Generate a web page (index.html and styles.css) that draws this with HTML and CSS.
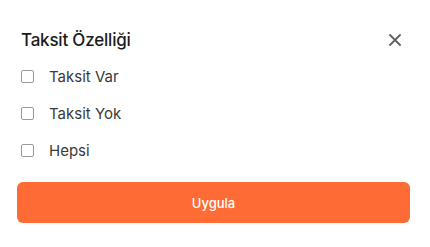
FILE: index.html
```html
<!DOCTYPE html>
<html lang="tr">

<head>
    <meta charset="UTF-8">
    <meta name="viewport" content="width=device-width, initial-scale=1.0">
    <title>Taksit Özelliği</title>
    <link rel="stylesheet" href="styles.css">
</head>

<body>
    <div class="filter_panel">
        <div class="filter_header">
            <h3 class="filter_title">Taksit Özelliği</h3>
            <a href="javascript:;" class="filter_close" aria-label="Kapat">
                <svg width="12" height="12" viewBox="0 0 12 12">
                    <path d="M1 1L11 11M11 1L1 11" stroke="#5f6166" stroke-width="1.8" stroke-linecap="round" />
                </svg>
            </a>
        </div>
        <ul class="filter_list">
            <li><label><input type="checkbox"><span>Taksit Var</span></label></li>
            <li><label><input type="checkbox"><span>Taksit Yok</span></label></li>
            <li><label><input type="checkbox"><span>Hepsi</span></label></li>
        </ul>
        <button class="filter_apply">Uygula</button>
    </div>
</body>

</html>
```

FILE: styles.css
```css
* {
    margin: 0;
    padding: 0;
    box-sizing: border-box;
}

body {
    background-color: #fff;
    font-family: "Inter", "Noto Sans", sans-serif;
}

.filter_panel {
    padding: 28px 20px 0 17px;
}

.filter_header {
    display: flex;
    align-items: center;
    justify-content: space-between;
    height: 24px;
    padding-left: 4px;
}

.filter_title {
    font-size: 17px;
    font-weight: 500;
    color: #1b1b1b;
    letter-spacing: -0.2px;
}

.filter_close {
    display: flex;
    margin-right: 9px;
}

.filter_list {
    list-style: none;
    margin-top: 6px;
    padding-left: 4px;
}

.filter_list li {
    height: 37px;
    display: flex;
    align-items: center;
}

.filter_list label {
    display: flex;
    align-items: center;
    cursor: pointer;
}

.filter_list input {
    appearance: none;
    width: 13px;
    height: 13px;
    border: 1px solid #9a9a9a;
    border-radius: 2px;
    background: #fff;
}

.filter_list span {
    margin-left: 15px;
    font-size: 15px;
    color: #3a3a3a;
}

.filter_apply {
    display: block;
    width: 393px;
    height: 41px;
    margin-top: 13px;
    border: none;
    border-radius: 6px;
    background-color: #ff6b35;
    color: #fff;
    font-family: inherit;
    font-size: 13px;
    font-weight: 500;
    cursor: pointer;
}
```
